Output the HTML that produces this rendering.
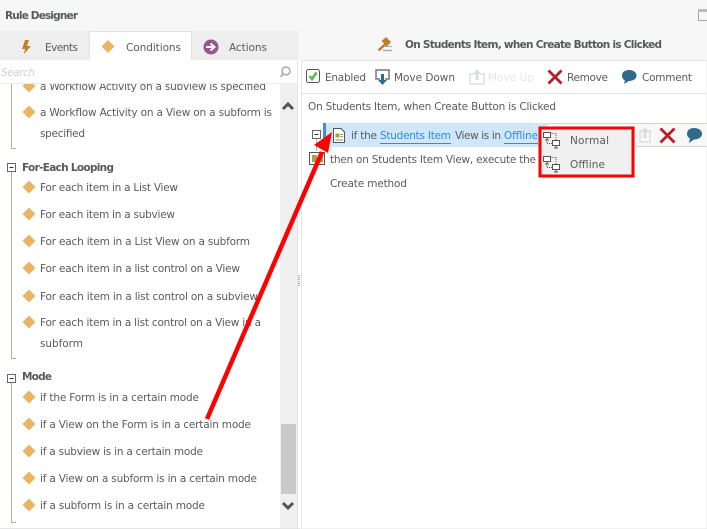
<!DOCTYPE html>
<html><head><meta charset="utf-8"><style>
html,body{margin:0;padding:0;background:#fff;overflow:hidden}
svg{display:block}
text{font-family:"DejaVu Sans","Liberation Sans",sans-serif;font-size:10.5px;fill:#5a5b5b}
.b{font-weight:bold;fill:#565a5a}
</style></head><body>
<svg width="707" height="529" viewBox="0 0 707 529" xmlns="http://www.w3.org/2000/svg">
<defs>
<path id="d" d="M0 -6.5L6.5 0L0 6.5L-6.5 0Z" fill="#e9b565"/>
<g id="net" fill="none" stroke="#555" stroke-width="1"><rect x="0.5" y="0.5" width="7" height="5" fill="#fff"/><path d="M2 8H6M4 6V8"/><rect x="9.5" y="8.500" width="7" height="5" fill="#fff"/><path d="M11 16H15M13 14V16"/><path d="M4 9.500V11.500H9M8.500 1.500H13V8" stroke-dasharray="1 1"/></g>
</defs>
<rect width="707" height="529" fill="#fff"/>
<rect width="707" height="60" fill="#f7f7f7"/>
<text x="5" y="19" class="b" textLength="73">Rule Designer</text>
<rect x="698.5" y="9.5" width="10" height="11" fill="none" stroke="#aaa"/>
<rect x="698" y="9" width="10" height="3" fill="#bbb"/>
<rect x="0" y="31" width="298" height="29" fill="#eeeeee"/>
<rect x="89.500" y="31.500" width="102" height="30" fill="#fff" stroke="#e2e2e2"/>
<path d="M25 40L22 49H25L24 54L31 46H27L29 40Z" fill="#c07f2c"/>
<text x="45" y="51" textLength="33">Events</text>
<path d="M108 40L114.500 46.500L108 53L101.500 46.500Z" fill="#e9b565"/>
<text x="126" y="51" textLength="55">Conditions</text>
<circle cx="211" cy="47" r="7.500" fill="#95578f"/>
<path d="M206 47H213M210.500 43.500L214.500 47L210.500 50.500" stroke="#fff" stroke-width="2" fill="none"/>
<text x="229" y="51" textLength="38">Actions</text>
<rect x="0" y="60" width="298" height="23" fill="#fff"/>
<rect x="89" y="59" width="102" height="3" fill="#fff"/>
<path d="M0 83.500H298" stroke="#ececec"/>
<text x="1" y="76" textLength="34" style="font-style:italic;fill:#cfcfcf">Search</text>
<circle cx="286" cy="71" r="4" fill="none" stroke="#aaa" stroke-width="1.500"/>
<path d="M283 74L280.500 77" stroke="#aaa" stroke-width="1.500"/>
<rect x="280" y="84" width="17" height="445" fill="#f0f0f0"/>
<rect x="281" y="424" width="15" height="70" fill="#c9c9c9"/>
<path d="M283 109L288 104L293 109" fill="none" stroke="#555" stroke-width="3"/>
<path d="M283 503L288 508L293 503" fill="none" stroke="#555" stroke-width="3"/>
<path d="M297.500 60V529" stroke="#e6e6e6"/>
<path d="M299 275V286" stroke="#555" stroke-dasharray="1 1"/>
<path d="M0 528.500H300" stroke="#e4e4e4"/>
<clipPath id="l"><rect x="0" y="84" width="280" height="445"/></clipPath>
<g clip-path="url(#l)">
<path d="M11.500 84V148.500H16" fill="none" stroke="#b3b1a2"/>
<use href="#d" x="29" y="86"/>
<text x="40" y="90" textLength="226">a Workflow Activity on a subview is specified</text>
<use href="#d" x="29" y="112"/>
<text x="40" y="116" textLength="232">a Workflow Activity on a View on a subform is</text>
<text x="40" y="137" textLength="45">specified</text>
<path d="M11.500 172V358.500H16" fill="none" stroke="#b3b1a2"/>
<rect x="7.500" y="163.500" width="8" height="8" fill="#fff" stroke="#666"/>
<path d="M9.500 167.500H13.500" stroke="#333"/>
<text x="22" y="171" class="b" textLength="92">For-Each Looping</text>
<use href="#d" x="29" y="187"/><text x="40" y="191" textLength="138">For each item in a List View</text>
<use href="#d" x="29" y="214"/><text x="40" y="218" textLength="135">For each item in a subview</text>
<use href="#d" x="29" y="241"/><text x="40" y="245" textLength="210">For each item in a List View on a subform</text>
<use href="#d" x="29" y="268"/><text x="40" y="272" textLength="200">For each item in a list control on a View</text>
<use href="#d" x="29" y="296"/><text x="40" y="300" textLength="218">For each item in a list control on a subview</text>
<use href="#d" x="29" y="322"/><text x="40" y="326" textLength="221">For each item in a list control on a View in a</text>
<text x="40" y="347" textLength="43">subform</text>
<path d="M11.500 381V522.500H16" fill="none" stroke="#b3b1a2"/>
<rect x="7.500" y="374.500" width="8" height="8" fill="#fff" stroke="#666"/>
<path d="M9.500 378.500H13.500" stroke="#333"/>
<text x="22" y="380" class="b" textLength="30">Mode</text>
<use href="#d" x="29" y="397"/><text x="40" y="401" textLength="159">if the Form is in a certain mode</text>
<use href="#d" x="29" y="424"/><text x="40" y="428" textLength="211">if a View on the Form is in a certain mode</text>
<use href="#d" x="29" y="451"/><text x="40" y="455" textLength="163">if a subview is in a certain mode</text>
<use href="#d" x="29" y="478"/><text x="40" y="482" textLength="217">if a View on a subform is in a certain mode</text>
<use href="#d" x="29" y="505"/><text x="40" y="509" textLength="165">if a subform is in a certain mode</text>
</g>
<path d="M378.500 50.500L386 43.500" stroke="#c07f2c" stroke-width="2.500" fill="none"/>
<path d="M381.500 41L386 37L391 42L387 46.500Z" fill="#c07f2c"/>
<path d="M385 46.500H392" stroke="#aaa"/>
<path d="M383 50.500H392" stroke="#aaa" stroke-width="1.500"/>
<text x="405" y="48" class="b" textLength="257">On Students Item, when Create Button is Clicked</text>
<path d="M301.500 60.500H707V529H301.500Z" fill="#fff" stroke="#e4e4e4"/>
<path d="M302 93.500H707" stroke="#e4e4e4"/>
<rect x="306.500" y="69.500" width="13" height="13" rx="2" fill="#fff" stroke="#555"/>
<path d="M309.500 76L312 79L316.500 72.500" fill="none" stroke="#5cb849" stroke-width="2.500"/>
<text x="325" y="81" textLength="41">Enabled</text>
<path d="M380 79H376V70H389V79H385" fill="none" stroke="#777" stroke-width="1.500"/>
<path d="M381 74H384V80H387L382.500 85L378 80H381Z" fill="#2e6c8c"/>
<text x="394" y="81" textLength="61">Move Down</text>
<path d="M474 74H470V84H484V74H480" fill="none" stroke="#ddd" stroke-width="1.500"/>
<path d="M475.500 80H478.500V74H481L477 69L473 74H475.500Z" fill="#d5dfe5"/>
<text x="488" y="81" textLength="46" style="fill:#e6e6e6">Move Up</text>
<path d="M548.500 70.500L561.500 83.500M561.500 70.500L548.500 83.500" stroke="#b3202c" stroke-width="2.800"/>
<text x="567" y="81" textLength="41">Remove</text>
<path d="M629 70C633 70 636.500 72 636.500 75.500C636.500 79 633 81 629 81L624 84L625 80.500C623 79.500 622 78 622 75.500C622 72 625 70 629 70Z" fill="#2f6a8a"/>
<text x="642" y="81" textLength="50">Comment</text>
<text x="308" y="110" textLength="248">On Students Item, when Create Button is Clicked</text>
<rect x="323" y="123" width="3" height="24" fill="#3d8fdc"/>
<rect x="326" y="123" width="222" height="24" fill="#cfe6fb"/>
<path d="M548 123.500H707M548 146.500H707" stroke="#d8d4c4"/>
<rect x="548" y="124" width="159" height="22" fill="#f8f8f8"/>
<rect x="312.500" y="130.500" width="8" height="8" fill="#fff" stroke="#666"/>
<path d="M314.500 134.500H318.500" stroke="#333"/>
<path d="M316.500 139V151" stroke="#b3b1a2"/>
<path d="M333.500 128.500H341L344.500 132V142.500H333.500Z" fill="#fff" stroke="#555"/>
<rect x="335.500" y="133.500" width="4" height="4" fill="#a6a636"/>
<path d="M340.500 134.500H343M340.500 136.500H343M335.500 140H343" stroke="#888"/>
<text x="351" y="139" textLength="26">if the</text>
<text x="380" y="139" textLength="71" style="fill:#2a8ee0">Students Item</text>
<path d="M380 143.500H451" stroke="#2a8ee0"/>
<text x="455" y="139" textLength="46">View is in</text>
<text x="504" y="139" textLength="34" style="fill:#2a8ee0">Offline</text>
<path d="M504 143.500H538" stroke="#2a8ee0"/>
<rect x="309.500" y="152.500" width="15" height="12" fill="#fff" stroke="#555"/>
<rect x="312" y="155" width="5" height="7" fill="#a6a636"/>
<rect x="319" y="155" width="4" height="7" fill="#c9852c"/>
<text x="330" y="163" textLength="206">then on Students Item View, execute the</text>
<text x="330" y="187" textLength="77">Create method</text>
<path d="M644 131H640V142H650V131H646" fill="none" stroke="#ddd" stroke-width="1.500"/>
<path d="M643.500 138V132H641L645 127L649 132H646.500V138Z" fill="#d5dfe5"/>
<path d="M660.500 128.500L674.500 142.500M674.500 128.500L660.500 142.500" stroke="#b3202c" stroke-width="2.800"/>
<path d="M694 128C698 128 702 130 702 134C702 137.500 698 139.500 694 139.500L689 143L690 138.500C688 137.500 687 136 687 134C687 130 690 128 694 128Z" fill="#2f6a8a"/>
<rect x="539" y="127" width="96" height="50" fill="#f0f0f0"/>
<rect x="540" y="128" width="93" height="48" fill="none" stroke="#f00" stroke-width="3"/>
<use href="#net" x="543" y="132"/>
<text x="570" y="144" textLength="39">Normal</text>
<use href="#net" x="543" y="156"/>
<text x="570" y="168" textLength="35">Offline</text>
<path d="M207 419L322 152" stroke="#f00" stroke-width="4.500" fill="none"/>
<path d="M332 132L314 145L328 153Z" fill="#f00"/>
</svg>
</body></html>
